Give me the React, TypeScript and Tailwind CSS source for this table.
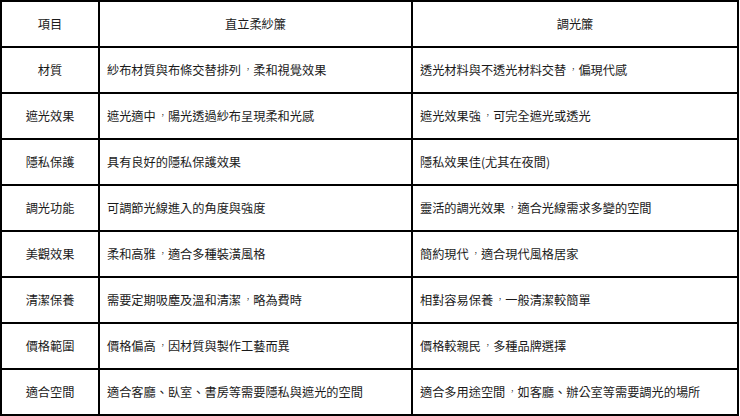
import React from "react";

const rows: [string, string, string][] = [
  ["材質", "紗布材質與布條交替排列，柔和視覺效果", "透光材料與不透光材料交替，偏現代感"],
  ["遮光效果", "遮光適中，陽光透過紗布呈現柔和光感", "遮光效果強，可完全遮光或透光"],
  ["隱私保護", "具有良好的隱私保護效果", "隱私效果佳(尤其在夜間)"],
  ["調光功能", "可調節光線進入的角度與強度", "靈活的調光效果，適合光線需求多變的空間"],
  ["美觀效果", "柔和高雅，適合多種裝潢風格", "簡約現代，適合現代風格居家"],
  ["清潔保養", "需要定期吸塵及溫和清潔，略為費時", "相對容易保養，一般清潔較簡單"],
  ["價格範圍", "價格偏高，因材質與製作工藝而異", "價格較親民，多種品牌選擇"],
  ["適合空間", "適合客廳、臥室、書房等需要隱私與遮光的空間", "適合多用途空間，如客廳、辦公室等需要調光的場所"],
];

function Txt({ s }: { s: string }) {
  const parts = s.split("，");
  return (
    <>
      {parts.map((p, i) => (
        <React.Fragment key={i}>
          {p}
          {i < parts.length - 1 && (
            <span className="inline-block w-[1em] pl-[3.4px] text-left">
              <span className="relative -top-[3px] text-[7px]">，</span>
            </span>
          )}
        </React.Fragment>
      ))}
    </>
  );
}

export default function App() {
  return (
    <div
      lang="zh-TW"
      className="w-[740px] h-[416px] bg-white overflow-hidden"
      style={{ fontFamily: '"Noto Sans CJK TC", "Noto Sans", sans-serif' }}
    >
      <table className="table-fixed border-collapse w-[739px] h-[415px] text-[12.2px] leading-none text-[#1a1a1a]">
        <colgroup>
          <col className="w-[98px]" />
          <col className="w-[313px]" />
          <col />
        </colgroup>
        <thead>
          <tr className="h-[46px]">
            <th className="border-2 border-black font-normal text-center">項目</th>
            <th className="border-2 border-black font-normal text-center">直立柔紗簾</th>
            <th className="border-2 border-black font-normal text-center">調光簾</th>
          </tr>
        </thead>
        <tbody>
          {rows.map((r) => (
            <tr key={r[0]} className="h-[46px]">
              <td className="border-2 border-black text-center">{r[0]}</td>
              <td className="border-2 border-black px-[7px] text-left">
                <Txt s={r[1]} />
              </td>
              <td className="border-2 border-black px-[7px] text-left">
                <Txt s={r[2]} />
              </td>
            </tr>
          ))}
        </tbody>
      </table>
    </div>
  );
}
